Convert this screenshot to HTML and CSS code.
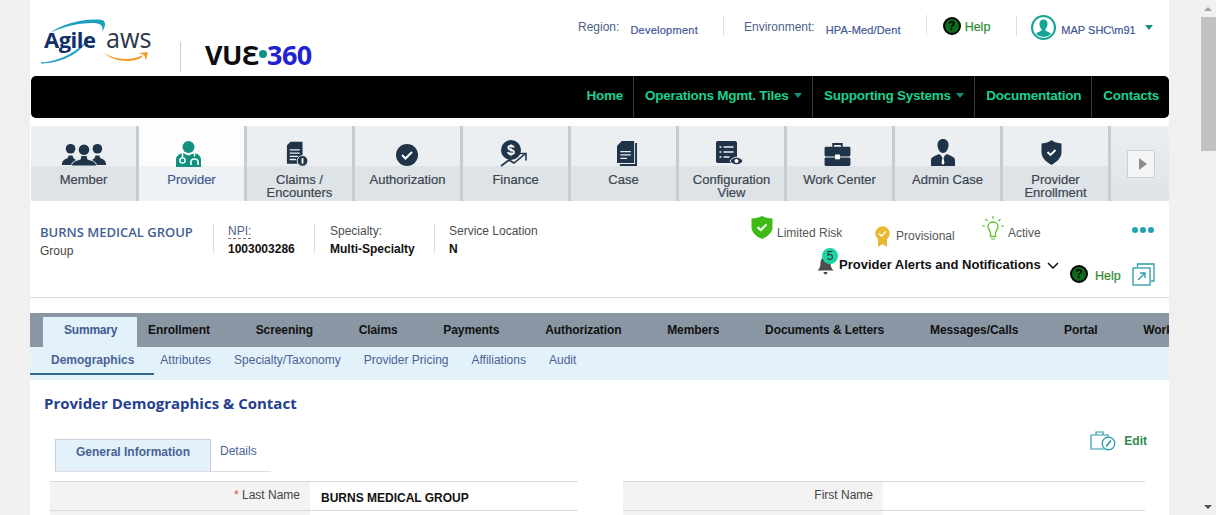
FILE: index.html
```html
<!DOCTYPE html>
<html lang="en">
<head>
  <meta charset="UTF-8" />
  <title>VUE360 Provider</title>
  <meta name="viewport" content="width=device-width, initial-scale=1.0" />
  <link rel="stylesheet" href="styles.css">
</head>
<body>
  <div class="page">
    <header class="header">
      <div class="logos">
        <div class="logo-agile">
          <svg class="agile-ring" width="68" height="48" viewBox="0 0 68 48">
            <path d="M1 45C20 44 42 32 49 19C44 32 24 45 1 45Z" fill="#1aa0c0" stroke="#1aa0c0" stroke-width=".8"/>
            <path d="M10 15C22 6 44 0 62 2C66 3 66 8 62 14C64 7 60 5 52 5C38 5 22 9 10 15Z" fill="#1aa0c0"/>
          </svg>
          <span class="agile-text">Agile</span>
        </div>
        <div class="logo-aws">
          <span class="aws-text">aws</span>
          <svg class="aws-smile" width="46" height="14" viewBox="0 0 46 14">
            <path d="M1 3C12 10 28 11 40 5L38 8C28 13 11 12 1 3Z" fill="#f59a23"/>
            <path d="M36 3L45 2L43 10L41 5Z" fill="#f59a23"/>
          </svg>
        </div>
        <div class="logo-sep"></div>
        <div class="logo-vue"><span class="vue-black">VU<span class="vue-e">Ɛ</span></span><span class="vue-dot"></span><span class="vue-blue">360</span></div>
      </div>
      <div class="top-info">
        <span class="top-label">Region:</span>
        <span class="top-value region-value">Development</span>
        <span class="top-sep sep-a"></span>
        <span class="top-label">Environment:</span>
        <span class="top-value env-value">HPA-Med/Dent</span>
        <span class="top-sep sep-b"></span>
        <span class="help-icon top-help-icon">?</span>
        <span class="help-text top-help">Help</span>
        <span class="top-sep sep-c"></span>
        <svg class="avatar" width="25" height="25" viewBox="0 0 25 25">
          <circle cx="12.5" cy="12.5" r="11.5" fill="#fff" stroke="#12a594" stroke-width="2"/>
          <path d="M12.5 4.5c3 0 4.300 2.300 4 5-.2 2-1.100 3.600-2 4.500v1.500c1.500 1 4 1.500 5.500 3.500a11 11 0 0 1-15 0c1.500-2 4-2.500 5.500-3.500V14c-.9-.9-1.800-2.500-2-4.500-.3-2.700 1-5 4-5Z" fill="#12a594"/>
        </svg>
        <span class="user-name">MAP SHC\m91</span>
        <span class="caret user-caret"></span>
      </div>
    </header>

    <nav class="main-nav">
      <a class="nav-item">Home</a>
      <a class="nav-item">Operations Mgmt. Tiles <span class="caret nav-caret"></span></a>
      <a class="nav-item">Supporting Systems <span class="caret nav-caret"></span></a>
      <a class="nav-item">Documentation</a>
      <a class="nav-item">Contacts</a>
    </nav>

    <div class="tiles">
      <div class="tile">
        <div class="tile-top">
          <svg width="46" height="23" viewBox="0 0 46 24" class="ico">
            <circle cx="9" cy="6" r="5"/><circle cx="37" cy="6" r="5"/>
            <path d="M0 23c0-5 3-6 6-7l1-3h4l1 3 3 2-4 5ZM46 23c0-5-3-6-6-7l-1-3h-4l-1 3-3 2 4 5Z"/>
            <circle cx="23" cy="7" r="5.500"/>
            <path d="M10 24c0-5 5-6 9-7l1-4h6l1 4c4 1 9 2 9 7Z" stroke="#eceff2" stroke-width="1"/>
          </svg>
        </div>
        <div class="tile-label">Member</div>
      </div>
      <div class="tile active">
        <div class="tile-top">
          <svg class="ico-provider" width="25" height="26" viewBox="0 0 25 26">
            <circle cx="12.500" cy="6" r="6" fill="#12917f"/>
            <path d="M0 26v-7c0-4 3-6 6.500-7l6 2.500 6-2.500c3.500 1 6.500 3 6.500 7v7Z" fill="#12917f"/>
            <path d="M6.500 12v5M18.500 12v3.500" stroke="#fff" stroke-width="1.400"/>
            <circle cx="6.500" cy="19.500" r="2.600" fill="none" stroke="#fff" stroke-width="1.400"/>
            <path d="M15 24v-3c0-4 7-4 7 0v3" fill="none" stroke="#fff" stroke-width="1.600"/>
          </svg>
        </div>
        <div class="tile-label">Provider</div>
      </div>
      <div class="tile">
        <div class="tile-top">
          <svg width="22" height="26" viewBox="0 0 24 27" class="ico ico-claims">
            <path d="M5 0h13v24H1V4Z"/>
            <path d="M4 9h11M4 12.500h11M4 16h9M4 19.500h7" stroke="#eceff2" stroke-width="1.400"/>
            <circle cx="18" cy="21" r="5.800" stroke="#eceff2"/>
            <rect x="17" y="18" width="2" height="6" fill="#fff"/>
          </svg>
        </div>
        <div class="tile-label">Claims /<br>Encounters</div>
      </div>
      <div class="tile">
        <div class="tile-top">
          <svg width="22" height="22" viewBox="0 0 22 22" class="ico ico-auth">
            <circle cx="11" cy="11" r="11"/>
            <path d="M6 11l3.500 3.500L16 8" fill="none" stroke="#fff" stroke-width="2"/>
          </svg>
        </div>
        <div class="tile-label">Authorization</div>
      </div>
      <div class="tile">
        <div class="tile-top">
          <svg width="28" height="27" viewBox="0 0 28 27" class="ico ico-finance">
            <circle cx="11" cy="10" r="10"/>
            <text x="11" y="15" class="dollar">$</text>
            <path d="M1 26l8-6 5 3 11-9" fill="none" stroke="#1f3449" stroke-width="1.600"/>
            <path d="M19 13.500h7v7" fill="none" stroke="#1f3449" stroke-width="1.600"/>
          </svg>
        </div>
        <div class="tile-label">Finance</div>
      </div>
      <div class="tile">
        <div class="tile-top">
          <svg width="20" height="25" viewBox="0 0 21 26" class="ico ico-case">
            <path d="M5 0h13v23H0V5Z"/>
            <path d="M19 2h2v24H3v-2h16Z"/>
            <path d="M3.500 11h11M3.500 14.500h11M3.500 18h7" stroke="#eceff2" stroke-width="1.300"/>
          </svg>
        </div>
        <div class="tile-label">Case</div>
      </div>
      <div class="tile">
        <div class="tile-top">
          <svg width="28" height="26" viewBox="0 0 28 26" class="ico ico-config">
            <rect x="0" y="0" width="21" height="22" rx="2"/>
            <path d="M3.500 6h2M7.500 6h10M3.500 11h2M7.500 11h10M3.500 16h2M7.500 16h6" stroke="#eceff2" stroke-width="1.400"/>
            <path d="M14 20c3-5 10-5 13 0-3 5-10 5-13 0Z" stroke="#eceff2"/>
            <circle cx="20.500" cy="20" r="2" fill="#fff"/>
          </svg>
        </div>
        <div class="tile-label">Configuration<br>View</div>
      </div>
      <div class="tile">
        <div class="tile-top">
          <svg width="27" height="23" viewBox="0 0 27 24" class="ico ico-work">
            <path d="M9 4V1h9v3" fill="none" stroke="#1f3449" stroke-width="2"/>
            <rect x="0" y="4" width="27" height="10" rx="1.500"/>
            <rect x="0" y="15" width="27" height="9" rx="1.500"/>
            <rect x="11" y="12" width="5" height="5" fill="#fff"/>
          </svg>
        </div>
        <div class="tile-label">Work Center</div>
      </div>
      <div class="tile">
        <div class="tile-top">
          <svg width="24" height="27" viewBox="0 0 24 27" class="ico ico-admin">
            <path d="M12 0c3.500 0 5.500 2.500 5.500 6S15.500 14 12 14 6.500 9.500 6.500 6 8.500 0 12 0Z"/>
            <path d="M0 27v-6c0-3 4-4 8-6l4 3 4-3c4 2 8 3 8 6v6Z"/>
            <path d="M10.500 17h3l-1 2 1 5-1.500 2-1.500-2 1-5Z" fill="#fff"/>
          </svg>
        </div>
        <div class="tile-label">Admin Case</div>
      </div>
      <div class="tile">
        <div class="tile-top">
          <svg width="21" height="25" viewBox="0 0 21 25" class="ico ico-shield">
            <path d="M10.500 0c2 2 5 3 10 3.500V12c0 6-5 10-10 13C5.500 22 .5 18 .5 12V3.500C5.500 3 8.500 2 10.500 0Z"/>
            <path d="M6.500 12l3 3 5-5" fill="none" stroke="#fff" stroke-width="1.800"/>
          </svg>
        </div>
        <div class="tile-label">Provider<br>Enrollment</div>
      </div>
      <div class="tile-more">
        <button class="more-btn"><span class="more-arrow"></span></button>
      </div>
    </div>

    <section class="info">
      <div class="info-name">
        <div class="group-name">BURNS MEDICAL GROUP</div>
        <div class="group-type">Group</div>
      </div>
      <div class="info-col npi-col">
        <div class="info-label npi-label">NPI:</div>
        <div class="info-value">1003003286</div>
      </div>
      <div class="info-col spec-col">
        <div class="info-label">Specialty:</div>
        <div class="info-value">Multi-Specialty</div>
      </div>
      <div class="info-col loc-col">
        <div class="info-label">Service Location</div>
        <div class="info-value">N</div>
      </div>
      <div class="info-right">
        <div class="status-row">
          <div class="status risk">
            <svg width="22" height="23" viewBox="0 0 22 23">
              <path d="M11 0c3 1.500 6 2.500 10.500 2.500V11c0 6-5 9.500-10.500 12C5.500 20.500.5 17 .5 11V2.500C5 2.500 8 1.500 11 0Z" fill="#3fbb17"/>
              <path d="M6.500 11l3.200 3.200 5.800-5.800" fill="none" stroke="#fff" stroke-width="2"/>
            </svg>
            <span>Limited Risk</span>
          </div>
          <div class="status prov">
            <svg width="15" height="21" viewBox="0 0 15 21">
              <path d="M3 12v9l4.500-3 4.500 3v-9Z" fill="#e6b92e"/>
              <circle cx="7.500" cy="7.500" r="7.200" fill="#e6b92e"/>
              <path d="M4 7.500l2.500 2.500L11 5.500" fill="none" stroke="#fff" stroke-width="1.500"/>
            </svg>
            <span>Provisional</span>
          </div>
          <div class="status act">
            <svg width="22" height="25" viewBox="0 0 22 25">
              <path d="M11 6c-3 0-5 2.200-5 4.800 0 2.500 2 3.700 2.500 6.200v3.500h5V17c.5-2.500 2.500-3.700 2.500-6.200C16 8.200 14 6 11 6Z" fill="none" stroke="#5cc02e" stroke-width="1.300"/>
              <path d="M9 23h4M11 0v3M3.500 3l2 2M18.500 3l-2 2M0 10h3M19 10h3" stroke="#5cc02e" stroke-width="1.200"/>
            </svg>
            <span>Active</span>
          </div>
          <div class="dots"><i></i><i></i><i></i></div>
        </div>
        <div class="alert-row">
          <div class="bell-wrap">
            <svg width="17" height="18" viewBox="0 0 17 18">
              <path d="M8.500 0c3.500 0 5 3 5 6.500 0 3 1 5 3 7H.5c2-2 3-4 3-7C3.500 3 5 0 8.500 0Z" fill="#4d4d4d"/>
              <path d="M6.500 15h4c0 1.500-1 2.500-2 2.500S6.500 16.500 6.500 15Z" fill="#4d4d4d"/>
            </svg>
            <span class="badge">5</span>
          </div>
          <span class="alert-text">Provider Alerts and Notifications</span>
          <svg class="chev" width="12" height="7" viewBox="0 0 12 7">
            <path d="M1 1l5 5 5-5" fill="none" stroke="#111" stroke-width="1.500"/>
          </svg>
          <span class="help-icon alert-help-icon">?</span>
          <span class="help-text alert-help">Help</span>
          <svg class="popout" width="23" height="23" viewBox="0 0 23 23">
            <path d="M5.500 4V1h16.500v17h-3" fill="none" stroke="#2a9aa8" stroke-width="1.300"/>
            <rect x="1" y="5" width="17" height="17" fill="#fff" stroke="#2a9aa8" stroke-width="1.300"/>
            <path d="M6 17l7-7M8 10h5v5" fill="none" stroke="#2a9aa8" stroke-width="1.300"/>
          </svg>
        </div>
      </div>
    </section>

    <div class="tabs">
      <a class="tab active">Summary</a>
      <a class="tab first">Enrollment</a>
      <a class="tab">Screening</a>
      <a class="tab">Claims</a>
      <a class="tab">Payments</a>
      <a class="tab">Authorization</a>
      <a class="tab">Members</a>
      <a class="tab">Documents &amp; Letters</a>
      <a class="tab">Messages/Calls</a>
      <a class="tab">Portal</a>
      <a class="tab">Work</a>
    </div>
    <div class="subtabs">
      <a class="subtab active">Demographics</a>
      <a class="subtab">Attributes</a>
      <a class="subtab">Specialty/Taxonomy</a>
      <a class="subtab">Provider Pricing</a>
      <a class="subtab">Affiliations</a>
      <a class="subtab">Audit</a>
    </div>

    <h2 class="section-title">Provider Demographics &amp; Contact</h2>

    <div class="card-head">
      <div class="card-tabs">
        <a class="card-tab active">General Information</a>
        <a class="card-tab">Details</a>
      </div>
      <div class="edit">
        <svg width="26" height="21" viewBox="0 0 26 21">
          <path d="M1 5h16M1 5v14h13M6 5V2h7v3" fill="none" stroke="#2a9aa8" stroke-width="1.200"/>
          <path d="M17 5h1v2" fill="none" stroke="#2a9aa8" stroke-width="1.200"/>
          <circle cx="18.500" cy="13.500" r="6.300" fill="#fff" stroke="#2a9aa8" stroke-width="1.200"/>
          <path d="M16 16.500l5-6" stroke="#2a9aa8" stroke-width="1.800"/>
        </svg>
        <span>Edit</span>
      </div>
    </div>

    <div class="form-row">
      <div class="form-half">
        <div class="form-label"><span class="req">*</span> Last Name</div>
        <div class="form-value">BURNS MEDICAL GROUP</div>
      </div>
      <div class="form-half right">
        <div class="form-label">First Name</div>
        <div class="form-value"></div>
      </div>
    </div>
    <div class="form-row">
      <div class="form-half">
        <div class="form-label"></div>
      </div>
      <div class="form-half right">
        <div class="form-label"></div>
      </div>
    </div>
  </div>

  <div class="scrollbar">
    <div class="sb-btn"><span class="sb-up"></span></div>
    <div class="sb-thumb"></div>
    <div class="sb-track"></div>
    <div class="sb-btn"><span class="sb-down"></span></div>
  </div>
</body>
</html>
```

FILE: styles.css
```css
html, body {
  margin: 0;
  height: 515px;
  overflow: hidden;
}

body {
  background: #f0f0f0;
  font-family: "Liberation Sans", Arial, sans-serif;
  font-size: 12px;
  color: #333;
  display: flex;
  padding-left: 30px;
  box-sizing: border-box;
  width: 1216px;
}

.page {
  width: 1139px;
  height: 515px;
  background: #fff;
  overflow: hidden;
  flex: none;
}

/* header */
.header {
  height: 76px;
  display: flex;
  position: relative;
}

.logos {
  display: flex;
  width: 330px;
  flex: none;
}

.logo-agile {
  position: relative;
  width: 68px;
  height: 76px;
  margin-left: 10px;
}

.agile-ring {
  position: absolute;
  left: 0;
  top: 18px;
}

.agile-text {
  position: absolute;
  left: 4px;
  top: 24px;
  font-family: "Open Sans", sans-serif;
  font-weight: 700;
  font-size: 22px;
  letter-spacing: -0.5px;
  color: #12306b;
}

.logo-aws {
  position: relative;
  width: 50px;
}

.aws-text {
  position: absolute;
  left: -2px;
  top: 22px;
  font-family: "Open Sans", sans-serif;
  font-size: 28px;
  line-height: 30px;
  color: #2c3646;
  transform: scaleX(.9);
  transform-origin: left;
}

.aws-smile {
  position: absolute;
  left: -5px;
  top: 50px;
}

.logo-sep {
  width: 1px;
  height: 30px;
  margin: 42px 0 0 22px;
  background: #ccc;
}

.logo-vue {
  margin: 39px 0 0 24px;
  display: flex;
  align-items: center;
  height: 30px;
  font-family: "Noto Sans", sans-serif;
  font-weight: 700;
  font-size: 27px;
  letter-spacing: -0.5px;
}

.vue-black { color: #0d0d0d; }
.vue-blue { color: #2222d0; }

.vue-dot {
  width: 8px;
  height: 8px;
  border-radius: 50%;
  background: #12917f;
}

.top-info {
  display: flex;
  align-items: flex-start;
  margin-left: 218px;
  width: 591px;
  flex: none;
}

.top-label {
  font-size: 12px;
  color: #4f5f88;
  margin-top: 20px;
}

.top-value {
  font-size: 11px;
  color: #3f5596;
  margin-top: 24px;
  -webkit-text-stroke: .2px #3f5596;
}

.region-value { margin-left: 11px; letter-spacing: .25px; }
.env-value { margin-left: 11px; letter-spacing: .15px; }

.top-sep {
  width: 1px;
  height: 20px;
  background: #ddd;
  margin-top: 16px;
}

.sep-a { margin: 16px 20px 0 25px; }
.sep-b { margin: 15px 16px 0 25px; }
.sep-c { margin: 16px 14px 0 26px; }

.help-icon {
  display: inline-block;
  width: 14px;
  height: 14px;
  border: 2px solid #000;
  border-radius: 50%;
  background: #0f6b1e;
  color: #000;
  font-size: 12px;
  font-weight: 700;
  line-height: 14px;
  text-align: center;
}

.top-help-icon { margin-top: 17px; }

.help-text {
  color: #2f8a2f;
  font-size: 12.5px;
  -webkit-text-stroke: .2px #2f8a2f;
}

.top-help {
  margin: 20px 0 0 4px;
}

.avatar { margin-top: 15px; }

.user-name {
  font-size: 11px;
  color: #3f5596;
  margin: 24px 0 0 5px;
  -webkit-text-stroke: .2px #3f5596;
  width: 84px;
}

.caret {
  display: inline-block;
  width: 0;
  height: 0;
  border-left: 4px solid transparent;
  border-right: 4px solid transparent;
  border-top: 5px solid #12917f;
}

.user-caret { margin-top: 25px; }

/* black nav */
.main-nav {
  height: 42px;
  margin-left: 1px;
  background: #000;
  border-radius: 5px;
  display: flex;
  justify-content: flex-end;
}

.nav-item {
  height: 42px;
  line-height: 39px;
  padding: 0 10px 0 11px;
  color: #1bd18d;
  font-size: 13.5px;
  font-weight: 700;
  border-left: 1px solid #3a3a3a;
  box-sizing: border-box;
  letter-spacing: -.25px;
}

.nav-item:first-child { border-left: 0; }

.nav-caret {
  border-top-color: #12917f;
  margin-left: 2px;
  vertical-align: 2px;
}

/* tiles */
.tiles {
  display: flex;
  margin: 8px 0 0 1px;
  height: 75px;
  background: linear-gradient(#eceef1, #dde3e6);
}

.tile {
  width: 108px;
  flex: none;
  box-sizing: border-box;
  border-right: 3px solid #c9cccd;
  text-align: center;
  background: #dde3e6;
}

.tile-top {
  height: 40px;
  background: #eceff2;
  display: flex;
  align-items: flex-end;
  justify-content: center;
  box-sizing: border-box;
  padding-bottom: 0;
}

.tile-label {
  padding-top: 7px;
  font-size: 13px;
  line-height: 13px;
  color: #3d4450;
  font-weight: 400;
  -webkit-text-stroke: .2px #3d4450;
}

.tile.active { background: #eef1f5; }
.tile.active .tile-top { background: #fdfdfe; }
.tile.active .tile-label { color: #3f5b8f; -webkit-text-stroke: .2px #3f5b8f; }

.ico { fill: #1f3449; }

/* the icons in the source art are not centred in their tiles */
.ico-provider { transform: translate(-3px, 1px); }
.ico-claims { transform: translate(-3px, 1px); }
.ico-auth { transform: translateX(-1px); }
.ico-finance { transform: translate(-2px, 1px); }
.ico-case { transform: translateX(3px); }
.ico-config { transform: translate(-2px, 1px); }
.ico-work { transform: translateX(-2px); }
.ico-admin { transform: translateX(-5px); }
.ico-shield { transform: translate(-4px, -1px); }

.dollar {
  fill: #fff;
  font-size: 14px;
  font-weight: 700;
  text-anchor: middle;
}

.tile-more {
  flex: 1;
  display: flex;
  justify-content: center;
  padding: 24px 0 0 2px;
  box-sizing: border-box;
}

.more-btn {
  width: 28px;
  height: 28px;
  padding: 0;
  border: 1px solid #ccd0d3;
  background: #f3f4f5;
  display: flex;
  align-items: center;
  justify-content: center;
}

.more-arrow {
  border-left: 8px solid #8e8e8e;
  border-top: 6px solid transparent;
  border-bottom: 6px solid transparent;
  margin-left: 3px;
}

/* provider info */
.info {
  height: 97px;
  box-sizing: border-box;
  border-bottom: 1px solid #d9d9d9;
  display: flex;
  align-items: flex-start;
  position: relative;
}

.info-name {
  width: 183px;
  padding: 23px 0 0 10px;
  box-sizing: border-box;
  flex: none;
}

.group-name {
  font-family: "Open Sans", sans-serif;
  font-weight: 600;
  font-size: 13px;
  line-height: 17px;
  color: #3f5f96;
}

.group-type {
  font-size: 12px;
  color: #444;
  margin-top: 3px;
}

.info-col {
  margin-top: 23px;
  height: 29px;
  padding-left: 14px;
  border-left: 1px solid #ddd;
  flex: none;
  box-sizing: border-box;
}

.npi-col { width: 101px; }
.spec-col { width: 120px; padding-left: 15px; }
.loc-col { width: 150px; }

.info-label {
  font-size: 12px;
  line-height: 14px;
  color: #4d4d4d;
}

.npi-label {
  color: #4f5f88;
  display: inline-block;
  border-bottom: 1px dashed #777;
}

.info-value {
  font-size: 12px;
  font-weight: 700;
  color: #111;
  line-height: 14px;
  margin-top: 4px;
}

.npi-label + .info-value { margin-top: 3px; }

.info-right {
  position: absolute;
  left: 721px;
  top: 15px;
  width: 410px;
}

.status-row {
  display: flex;
  align-items: flex-start;
  height: 41px;
}

.status {
  display: flex;
  font-size: 12px;
  color: #555;
}

.status span { margin-left: 4px; }

.risk { width: 124px; }
.risk span { margin-top: 10px; }
.prov { width: 107px; margin-top: 10px; }
.prov span { margin: 3px 0 0 6px; }
.act { width: 150px; }
.act span { margin-top: 10px; }

.dots {
  display: flex;
  gap: 2px;
  margin-top: 11px;
}

.dots i {
  width: 6px;
  height: 6px;
  border-radius: 50%;
  background: #26a0b5;
  display: block;
}

.alert-row {
  display: flex;
  align-items: flex-start;
  padding-left: 66px;
}

.bell-wrap {
  position: relative;
  width: 22px;
  height: 18px;
  margin-top: 0;
}

.badge {
  position: absolute;
  left: 5px;
  top: -9px;
  width: 16px;
  height: 16px;
  border-radius: 50%;
  background: #1dd3a4;
  color: #333;
  font-size: 12px;
  line-height: 16px;
  text-align: center;
}

.alert-text {
  font-size: 13px;
  font-weight: 700;
  color: #111;
  line-height: 16px;
  width: 208px;
  white-space: nowrap;
}

.chev { margin-top: 5px; }

.help-icon.alert-help-icon { margin: 8px 0 0 11px; }
.alert-help { margin: 12px 0 0 7px; }
.popout { margin: 6px 0 0 11px; }

/* tabs */
.tabs {
  margin-top: 15px;
  height: 34px;
  background: #8a96a3;
  display: flex;
  padding-left: 13px;
  overflow: hidden;
}

.tab {
  flex: none;
  padding: 0 22.88px;
  line-height: 34px;
  font-size: 12px;
  font-weight: 700;
  letter-spacing: -.08px;
  color: #111;
  white-space: nowrap;
}

.tab.first { padding-left: 11px; }

.tab.active {
  margin-top: 4px;
  width: 94px;
  box-sizing: border-box;
  line-height: 26px;
  background: #e3f1fb;
  color: #3f5b8f;
  padding: 0 0 0 21px;
  letter-spacing: -.2px;
}

.subtabs {
  height: 33px;
  background: #e3f1fb;
  display: flex;
}

.subtab {
  height: 26px;
  line-height: 26px;
  font-size: 12px;
  color: #4a6294;
  margin-left: 23px;
  white-space: nowrap;
}

.subtab.active {
  margin-left: 0;
  padding: 0 20px 0 21px;
  font-weight: 700;
  border-bottom: 2px solid #34688f;
  margin-right: -17px;
}

.section-title {
  margin: 13px 0 0 14px;
  font-family: "Open Sans", sans-serif;
  font-size: 15px;
  line-height: 20px;
  font-weight: 700;
  color: #24408f;
}

.card-head {
  display: flex;
  justify-content: space-between;
  margin-top: 26px;
  height: 42px;
  padding: 0 22px 0 25px;
}

.card-tabs {
  display: flex;
  height: 32px;
  border-bottom: 1px solid #ddd;
}

.card-tab {
  font-size: 12px;
  color: #4a6294;
  padding-left: 9px;
  width: 60px;
  line-height: 25px;
  box-sizing: border-box;
}

.card-tab.active {
  width: 156px;
  padding: 0;
  text-align: center;
  background: #e3f1fb;
  border-left: 1px solid #ccd;
  border-top: 1px solid #ccd;
  border-right: 1px solid #ccd;
  font-weight: 700;
  line-height: 25px;
}

.edit {
  display: flex;
  align-items: flex-start;
  color: #2f8a4f;
  font-weight: 700;
  margin-top: -9px;
}

.edit span { margin: 4px 0 0 8px; }

.form-row {
  display: flex;
  margin-left: 20px;
  width: 1095px;
  gap: 45px;
}

.form-half {
  flex: none;
  width: 528px;
  display: flex;
  height: 28px;
  border-top: 1px solid #d9d9d9;
  border-bottom: 1px solid #d9d9d9;
  box-sizing: content-box;
}

.form-row + .form-row .form-half { border-top: 0; }

.form-half.right { width: 522px; }

.form-label {
  width: 260px;
  flex: none;
  background: #f3f3f3;
  text-align: right;
  padding-right: 10px;
  box-sizing: border-box;
  line-height: 27px;
  color: #444;
}

.req { color: #d9534f; }

.form-value {
  padding-left: 11px;
  font-weight: 700;
  color: #111;
  line-height: 33px;
}

/* scrollbar */
.scrollbar {
  width: 17px;
  height: 515px;
  margin-left: 30px;
  background: #f1f1f1;
  flex: none;
  display: flex;
  flex-direction: column;
}

.sb-btn {
  height: 17px;
  display: flex;
  align-items: center;
  justify-content: center;
}

.sb-up {
  border-left: 4px solid transparent;
  border-right: 4px solid transparent;
  border-bottom: 4px solid #a3a3a3;
}

.sb-down {
  border-left: 4px solid transparent;
  border-right: 4px solid transparent;
  border-top: 4px solid #505050;
}

.sb-thumb {
  height: 134px;
  margin-left: 2px;
  background: #c1c1c1;
}

.sb-track { flex: 1; }
```
